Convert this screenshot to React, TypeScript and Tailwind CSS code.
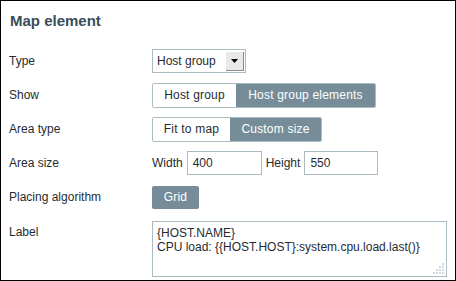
import type { ReactNode } from 'react';

const font = { fontFamily: '"Liberation Sans", Arial, sans-serif' };

function Row({ label, children }: { label: string; children: ReactNode }) {
  return (
    <div className="flex h-[34px] items-center">
      <div className="w-[143px] shrink-0 text-[12px] text-[#1f2c33]">{label}</div>
      <div className="flex items-center">{children}</div>
    </div>
  );
}

type Segment = { text: string; width: string };

function Segmented({ items, active }: { items: Segment[]; active: number }) {
  return (
    <div className="flex h-[25px] overflow-hidden rounded-[2px] border border-[#acbbc2]">
      {items.map((item, i) => (
        <div
          key={item.text}
          className={
            i === active
              ? `flex items-center justify-center bg-[#768d99] text-[12px] tracking-[0.2px] text-white ${item.width}`
              : `flex items-center justify-center bg-white text-[12px] tracking-[0.2px] text-[#1f2c33] ${item.width}`
          }
        >
          {item.text}
        </div>
      ))}
    </div>
  );
}

function ResizeGrip() {
  const dots: [number, number][] = [];
  for (let r = 0; r < 4; r++) {
    for (let c = 0; c < 4; c++) {
      if (r + c >= 3) dots.push([c * 3, r * 3]);
    }
  }
  return (
    <svg className="absolute bottom-[2px] right-[2px]" width="11" height="11" viewBox="0 0 11 11">
      {dots.map(([x, y]) => (
        <rect key={`${x}-${y}`} x={x} y={y} width="2" height="2" fill="#d3d8db" />
      ))}
    </svg>
  );
}

export default function App() {
  return (
    <div className="h-[281px] w-[456px] border border-black bg-white" style={font}>
      <div className="px-[8px]">
        <div className="h-[43px] pl-[1px] pt-[10px] text-[15px] font-bold leading-[20px] text-[#3b4d58]">
          Map element
        </div>

        <Row label="Type">
          <div className="flex h-[24px] w-[94px] items-center border border-[#acbbc2] bg-white pl-[4px]">
            <span className="flex-1 text-[12px] text-[#1f2c33]">Host group</span>
            <div className="mr-[1px] flex h-[19px] w-[18px] items-center justify-center border-b border-r border-[#8a8a8a] bg-[#e9e9e9]">
              <svg width="7" height="4" viewBox="0 0 7 4">
                <path d="M0 0h7L3.5 4z" fill="#000" />
              </svg>
            </div>
          </div>
        </Row>

        <Row label="Show">
          <Segmented
            items={[
              { text: 'Host group', width: 'w-[83px]' },
              { text: 'Host group elements', width: 'w-[139px]' },
            ]}
            active={1}
          />
        </Row>

        <Row label="Area type">
          <Segmented
            items={[
              { text: 'Fit to map', width: 'w-[77px]' },
              { text: 'Custom size', width: 'w-[91px]' },
            ]}
            active={1}
          />
        </Row>

        <Row label="Area size">
          <span className="mr-[4px] text-[12px] text-[#1f2c33]">Width</span>
          <div className="flex h-[24px] w-[75px] items-center border border-[#acbbc2] pl-[5px] text-[12px] text-[#1f2c33]">
            400
          </div>
          <span className="ml-[4px] mr-[4px] text-[12px] text-[#1f2c33]">Height</span>
          <div className="flex h-[24px] w-[74px] items-center border border-[#acbbc2] pl-[5px] text-[12px] text-[#1f2c33]">
            550
          </div>
        </Row>

        <Row label="Placing algorithm">
          <div className="flex h-[23px] w-[47px] items-center justify-center rounded-[2px] bg-[#768d99] text-[12px] tracking-[0.2px] text-white">
            Grid
          </div>
        </Row>

        <div className="flex">
          <div className="w-[143px] shrink-0 pt-[9px] text-[12px] text-[#1f2c33]">Label</div>
          <div className="relative mt-[7px] h-[56px] w-[301px] border border-[#acbbc2] px-[4px] pt-[4px] text-[12px] leading-[14px] text-[#1f2c33]">
            <div>{'{HOST.NAME}'}</div>
            <div>{'CPU load: {{HOST.HOST}:system.cpu.load.last()}'}</div>
            <ResizeGrip />
          </div>
        </div>
      </div>
    </div>
  );
}
